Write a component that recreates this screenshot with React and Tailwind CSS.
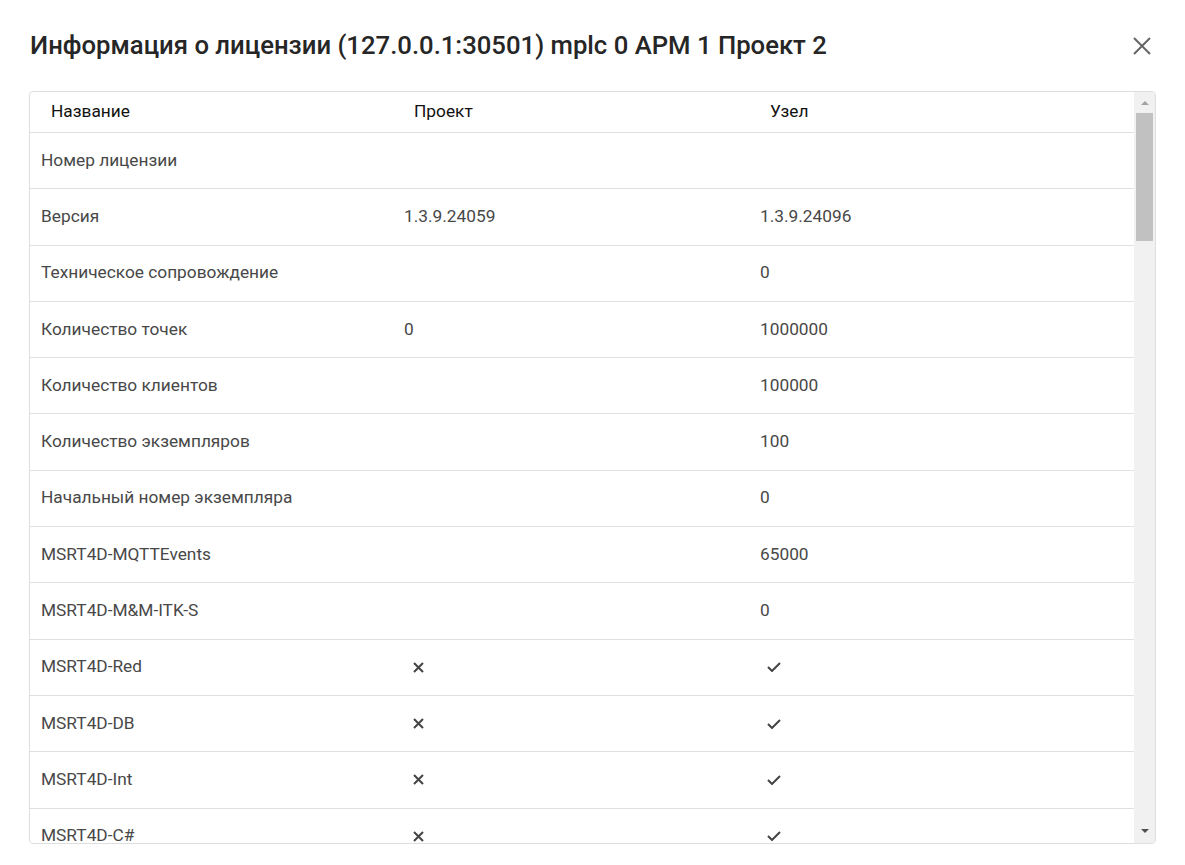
import React from "react";

const rows = [
  ["Номер лицензии", "", ""],
  ["Версия", "1.3.9.24059", "1.3.9.24096"],
  ["Техническое сопровождение", "", "0"],
  ["Количество точек", "0", "1000000"],
  ["Количество клиентов", "", "100000"],
  ["Количество экземпляров", "", "100"],
  ["Начальный номер экземпляра", "", "0"],
  ["MSRT4D-MQTTEvents", "", "65000"],
  ["MSRT4D-M&M-ITK-S", "", "0"],
  ["MSRT4D-Red", false, true],
  ["MSRT4D-DB", false, true],
  ["MSRT4D-Int", false, true],
  ["MSRT4D-C#", false, true],
];

function Cross() {
  return (
    <svg width="11" height="11" viewBox="0 0 11 11" className="ml-[9px]">
      <path d="M1 1L10 10M10 1L1 10" stroke="#444" strokeWidth="2" />
    </svg>
  );
}

function Check() {
  return (
    <svg width="14" height="10" viewBox="0 0 14 10" className="ml-[7px]">
      <path d="M1 5L5 9L13 1" stroke="#444" strokeWidth="2" fill="none" />
    </svg>
  );
}

function Cell({ value }) {
  if (value === true) return <Check />;
  if (value === false) return <Cross />;
  return <span>{value}</span>;
}

export default function App() {
  return (
    <div
      className="w-[1185px] h-[865px] bg-white overflow-hidden"
      style={{ fontFamily: "Roboto, 'Liberation Sans', sans-serif" }}
    >
      <div className="flex items-center justify-between pl-[30px] pr-[34px] pt-[29px] h-[62px]">
        <h1 className="text-[25.7px] font-medium text-[#262626] leading-none">
          Информация о лицензии (127.0.0.1:30501) mplc 0 АРМ 1 Проект 2
        </h1>
        <svg width="18" height="18" viewBox="0 0 18 18">
          <path d="M1 1L17 17M17 1L1 17" stroke="#666" strokeWidth="2" />
        </svg>
      </div>

      <div className="mx-[29px] mt-[29px] h-[753px] border border-[#dedede] rounded-[4px] flex overflow-hidden">
        <div className="flex-1 overflow-hidden">
          <div className="grid grid-cols-[364px_356px_1fr] h-[41px] items-center border-b border-[#e0e0e0] text-[17.3px] text-[#111]">
            <div className="pl-[21px]">Название</div>
            <div className="pl-[20px]">Проект</div>
            <div className="pl-[20px]">Узел</div>
          </div>
          {rows.map((r, i) => (
            <div
              key={i}
              className="grid grid-cols-[364px_356px_1fr] h-[56.3px] items-center border-b border-[#e0e0e0] text-[17.3px] text-[#484848]"
            >
              <div className="pl-[11px]">{r[0]}</div>
              <div className="pl-[10px] flex items-center">
                <Cell value={r[1]} />
              </div>
              <div className="pl-[10px] flex items-center">
                <Cell value={r[2]} />
              </div>
            </div>
          ))}
        </div>
        <div className="w-[21px] bg-[#f1f1f1] flex flex-col items-center">
          <div className="h-[21px] flex items-center justify-center">
            <div className="w-0 h-0 border-l-[4px] border-r-[4px] border-b-[4px] border-l-transparent border-r-transparent border-b-[#a3a3a3]" />
          </div>
          <div className="w-[17px] h-[128px] bg-[#c1c1c1]" />
          <div className="flex-1" />
          <div className="h-[24px] flex items-center justify-center">
            <div className="w-0 h-0 border-l-[4px] border-r-[4px] border-t-[4px] border-l-transparent border-r-transparent border-t-[#505050]" />
          </div>
        </div>
      </div>
    </div>
  );
}
